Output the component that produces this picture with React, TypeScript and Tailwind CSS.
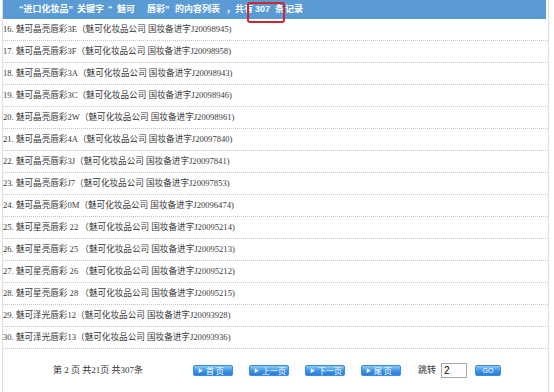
import React from "react";

const rows: [string, string][] = [
  ["16. 魅可晶亮唇彩3E", "J20098945"],
  ["17. 魅可晶亮唇彩3F", "J20098958"],
  ["18. 魅可晶亮唇彩3A", "J20098943"],
  ["19. 魅可晶亮唇彩3C", "J20098946"],
  ["20. 魅可晶亮唇彩2W", "J20098961"],
  ["21. 魅可晶亮唇彩4A", "J20097840"],
  ["22. 魅可晶亮唇彩3J", "J20097841"],
  ["23. 魅可晶亮唇彩J7", "J20097853"],
  ["24. 魅可晶亮唇彩0M", "J20096474"],
  ["25. 魅可星亮唇彩 22 ", "J20095214"],
  ["26. 魅可星亮唇彩 25 ", "J20095213"],
  ["27. 魅可星亮唇彩 26 ", "J20095212"],
  ["28. 魅可星亮唇彩 28 ", "J20095215"],
  ["29. 魅可泽光唇彩12", "J20093928"],
  ["30. 魅可泽光唇彩13", "J20093936"],
];

const font = { fontFamily: '"Liberation Serif", "Noto Sans CJK SC", serif' };

function Btn({ label }: { label: string }) {
  return (
    <div className="flex items-center h-[11px] w-[40px] rounded-[2px] bg-gradient-to-b from-[#8fcaf7] via-[#3f95e6] to-[#2a7fd6] border border-[#3b8be0] text-white text-[8px] leading-none pl-[4px] gap-[3px] shadow-[0_0_1px_#9cc9f3]">
      <span className="text-[5px] leading-none text-[#e8f4ff]">▶</span>
      <span className="whitespace-pre" style={{ fontFamily: '"Noto Sans CJK SC", sans-serif' }}>{label}</span>
    </div>
  );
}

export default function App() {
  return (
    <div className="relative w-[554px] h-[392px] bg-white overflow-hidden" style={font}>
      <div className="ml-[2px] w-[547px] h-full border-l border-r border-[#dedede]">
        <div
          className="h-[19px] mr-[2px] bg-[#5b9bd5] flex items-center text-white font-bold text-[9px] leading-none pl-[16px] whitespace-nowrap"
          style={{ fontFamily: '"Liberation Sans", "Noto Sans CJK SC", sans-serif' }}
        >
          <span className="flex-none w-[52px]">“进口化妆品”</span>
          <span className="flex-none ml-[6px] w-[27px]">关键字</span>
          <span className="flex-none ml-[4px] w-[5px]">“</span>
          <span className="flex-none ml-[4px] w-[18px]">魅可</span>
          <span className="flex-none ml-[12px] w-[18px]">唇彩</span>
          <span className="flex-none w-[5px]">”</span>
          <span className="flex-none ml-[5px] w-[45px]">的内容列表</span>
          <span className="flex-none ml-[6px] w-[9px]">，</span>
          <span className="flex-none w-[18px]">共有</span>
          <span className="flex-none ml-[2px] w-[15px]">307</span>
          <span className="flex-none ml-[5px] w-[9px]">条</span>
          <span className="flex-none ml-[1px] w-[18px]">记录</span>
        </div>
        {rows.map(([a, code]) => (
          <div
            key={a}
            className="h-[22px] border-b border-dotted border-[#c4c4c4] flex items-center text-[8.6px] text-[#3a3a3a] leading-none whitespace-pre"
          >
            {a}（魅可化妆品公司 国妆备进字{code})
          </div>
        ))}
        <div className="h-[43px] flex items-center text-[9px] text-[#333] leading-none">
          <span className="ml-[50px] w-[140px] whitespace-pre">第 2 页 共21页 共307条</span>
          <Btn label="首 页" />
          <div className="ml-[16px]"><Btn label="上一页" /></div>
          <div className="ml-[16px]"><Btn label="下一页" /></div>
          <div className="ml-[16px]"><Btn label="尾 页" /></div>
          <span className="ml-[17px] w-[20px]">跳转</span>
          <div
            className="ml-[3px] w-[26px] h-[15px] border border-[#a9a9a9] bg-white flex items-center pl-[2px] text-[10px] text-black"
            style={{ fontFamily: '"Liberation Sans", sans-serif' }}
          >
            2
          </div>
          <div className="ml-[8px] flex items-center justify-center h-[11px] w-[26px] rounded-[2px] bg-gradient-to-b from-[#8fcaf7] via-[#3f95e6] to-[#2a7fd6] border border-[#3b8be0] text-white text-[7px] leading-none" style={{ fontFamily: '"Liberation Sans", sans-serif' }}>
            GO
          </div>
        </div>
      </div>
      <div className="absolute left-[247px] top-[2px] w-[38px] h-[21px] border-2 border-[#d3262b] rounded-[3px]" />
    </div>
  );
}
